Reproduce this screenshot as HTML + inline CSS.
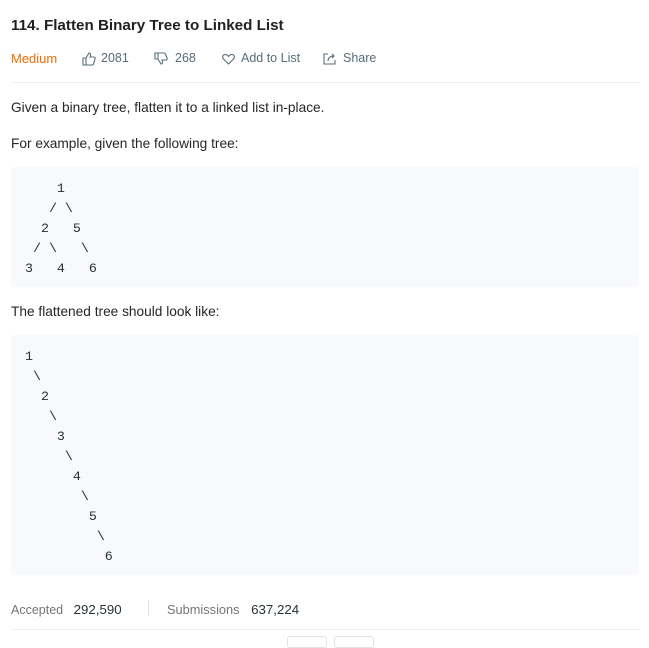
<!DOCTYPE html>
<html><head><style>
body{margin:0;background:#fff;font-family:"Liberation Sans",sans-serif;color:#262626;width:649px;height:640px;overflow:hidden;position:relative}
.a{position:absolute;white-space:nowrap}
pre{position:absolute;left:11px;margin:0;background:#f7f9fa;padding:0 0 0 14px;font-family:"Liberation Mono",monospace;font-size:13.3px;line-height:20px;color:#263238;border-radius:3px;width:614px}
.m{font-size:12.5px;color:#546e7a}
</style></head><body>
<div class="a" style="left:11px;top:17px;font-size:15.2px;font-weight:bold;color:#212121">114. Flatten Binary Tree to Linked List</div>
<div class="a" style="left:11px;top:51px;font-size:13px;color:#ef6c00">Medium</div>
<svg class="a" style="left:82px;top:52px" width="14" height="14" viewBox="0 0 14 14" fill="none" stroke="#546e7a" stroke-width="1.1"><path d="M1 6h3v7H1zM4 6l3-5c1 0 2 1 1.5 2.5L8 5h4c1 0 1.5 1 1 2l-1.5 5c-.3.7-.8 1-1.5 1H4"/></svg>
<div class="a m" style="left:101px;top:51px">2081</div>
<svg class="a" style="left:154px;top:52px" width="14" height="14" viewBox="0 0 14 14" fill="none" stroke="#546e7a" stroke-width="1.1"><path d="M1 1h3v6H1zM4 7l3 5c1 0 2-1 1.5-2.5L8 8h4c1 0 1.5-1 1-2L11.5 2c-.3-.7-.8-1-1.5-1H4"/></svg>
<div class="a m" style="left:175px;top:51px">268</div>
<svg class="a" style="left:222px;top:53px" width="13" height="12" viewBox="0 0 13 12" fill="none" stroke="#546e7a" stroke-width="1.1"><path d="M6.5 11L1.5 6C0 4.5.5 1.5 3.3 1.5c1.5 0 2.5 1 3.2 2 .7-1 1.7-2 3.2-2C12.5 1.5 13 4.5 11.5 6z"/></svg>
<div class="a m" style="left:241px;top:51px">Add to List</div>
<svg class="a" style="left:323px;top:52px" width="13" height="13" viewBox="0 0 13 13" fill="none" stroke="#546e7a" stroke-width="1.1"><path d="M5 2H1v10h11V8M5 9c0-3 2-5 6-5M9 2l2 2-2 2"/></svg>
<div class="a m" style="left:343px;top:51px">Share</div>
<div class="a" style="left:11px;top:82px;width:628px;height:1px;background:#eceff1"></div>
<div class="a" style="left:11px;top:100px;font-size:13.7px">Given a binary tree, flatten it to a linked list in-place.</div>
<div class="a" style="left:11px;top:136px;font-size:13.7px">For example, given the following tree:</div>
<pre style="top:167px;height:98px;padding-top:12px;padding-bottom:10px">    1
   / \
  2   5
 / \   \
3   4   6</pre>
<div class="a" style="left:11px;top:304px;font-size:13.7px">The flattened tree should look like:</div>
<pre style="top:335px;height:218px;padding-top:12px;padding-bottom:10px">1
 \
  2
   \
    3
     \
      4
       \
        5
         \
          6</pre>
<div class="a" style="left:11px;top:602px;font-size:12.5px;color:#757575">Accepted <span style="color:#263238;font-size:13.3px;margin-left:7px">292,590</span></div>
<div class="a" style="left:148px;top:600px;width:1px;height:16px;background:#e0e0e0"></div>
<div class="a" style="left:167px;top:602px;font-size:12.8px;color:#757575">Submissions <span style="color:#263238;font-size:13.3px;margin-left:8px">637,224</span></div>
<div class="a" style="left:11px;top:629px;width:628px;height:1px;background:#eceff1"></div>
<div class="a" style="left:287px;top:636px;width:38px;height:10px;border:1px solid #dfe3e6;border-radius:3px"></div>
<div class="a" style="left:334px;top:636px;width:38px;height:10px;border:1px solid #dfe3e6;border-radius:3px"></div>
</body></html>
